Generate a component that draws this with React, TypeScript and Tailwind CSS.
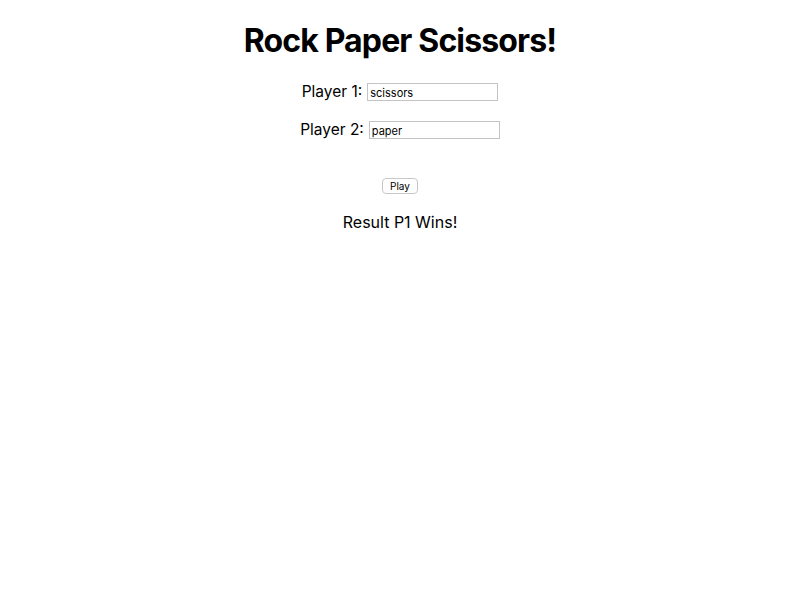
export default function App() {
  return (
    <div className="flex flex-col items-center text-black" style={{ fontFamily: "Inter, 'Noto Sans', sans-serif" }}>
      <h1 className="mt-[22px] text-[32px] font-bold leading-[38px] tracking-[-0.85px]">Rock Paper Scissors!</h1>
      <div className="mt-[22px] flex items-center gap-[5px]">
        <label className="text-[15.5px] leading-[20px]">Player 1:</label>
        <input
          defaultValue="scissors"
          className="h-[18px] w-[131px] border border-[#c4c4c4] px-[2px] pt-[2px] text-[11px] leading-[14px] outline-none"
        />
      </div>
      <div className="mt-[18px] flex items-center gap-[5px]">
        <label className="text-[15.5px] leading-[20px]">Player 2:</label>
        <input
          defaultValue="paper"
          className="h-[18px] w-[131px] border border-[#c4c4c4] px-[2px] pt-[2px] text-[11px] leading-[14px] outline-none"
        />
      </div>
      <button className="mt-[38px] h-[16px] rounded-[4px] border border-[#c8c8c8] bg-white px-[7px] text-[10px] leading-[14px]">
        Play
      </button>
      <p className="mt-[18px] text-[16px] leading-[20px]">Result P1 Wins!</p>
    </div>
  );
}
